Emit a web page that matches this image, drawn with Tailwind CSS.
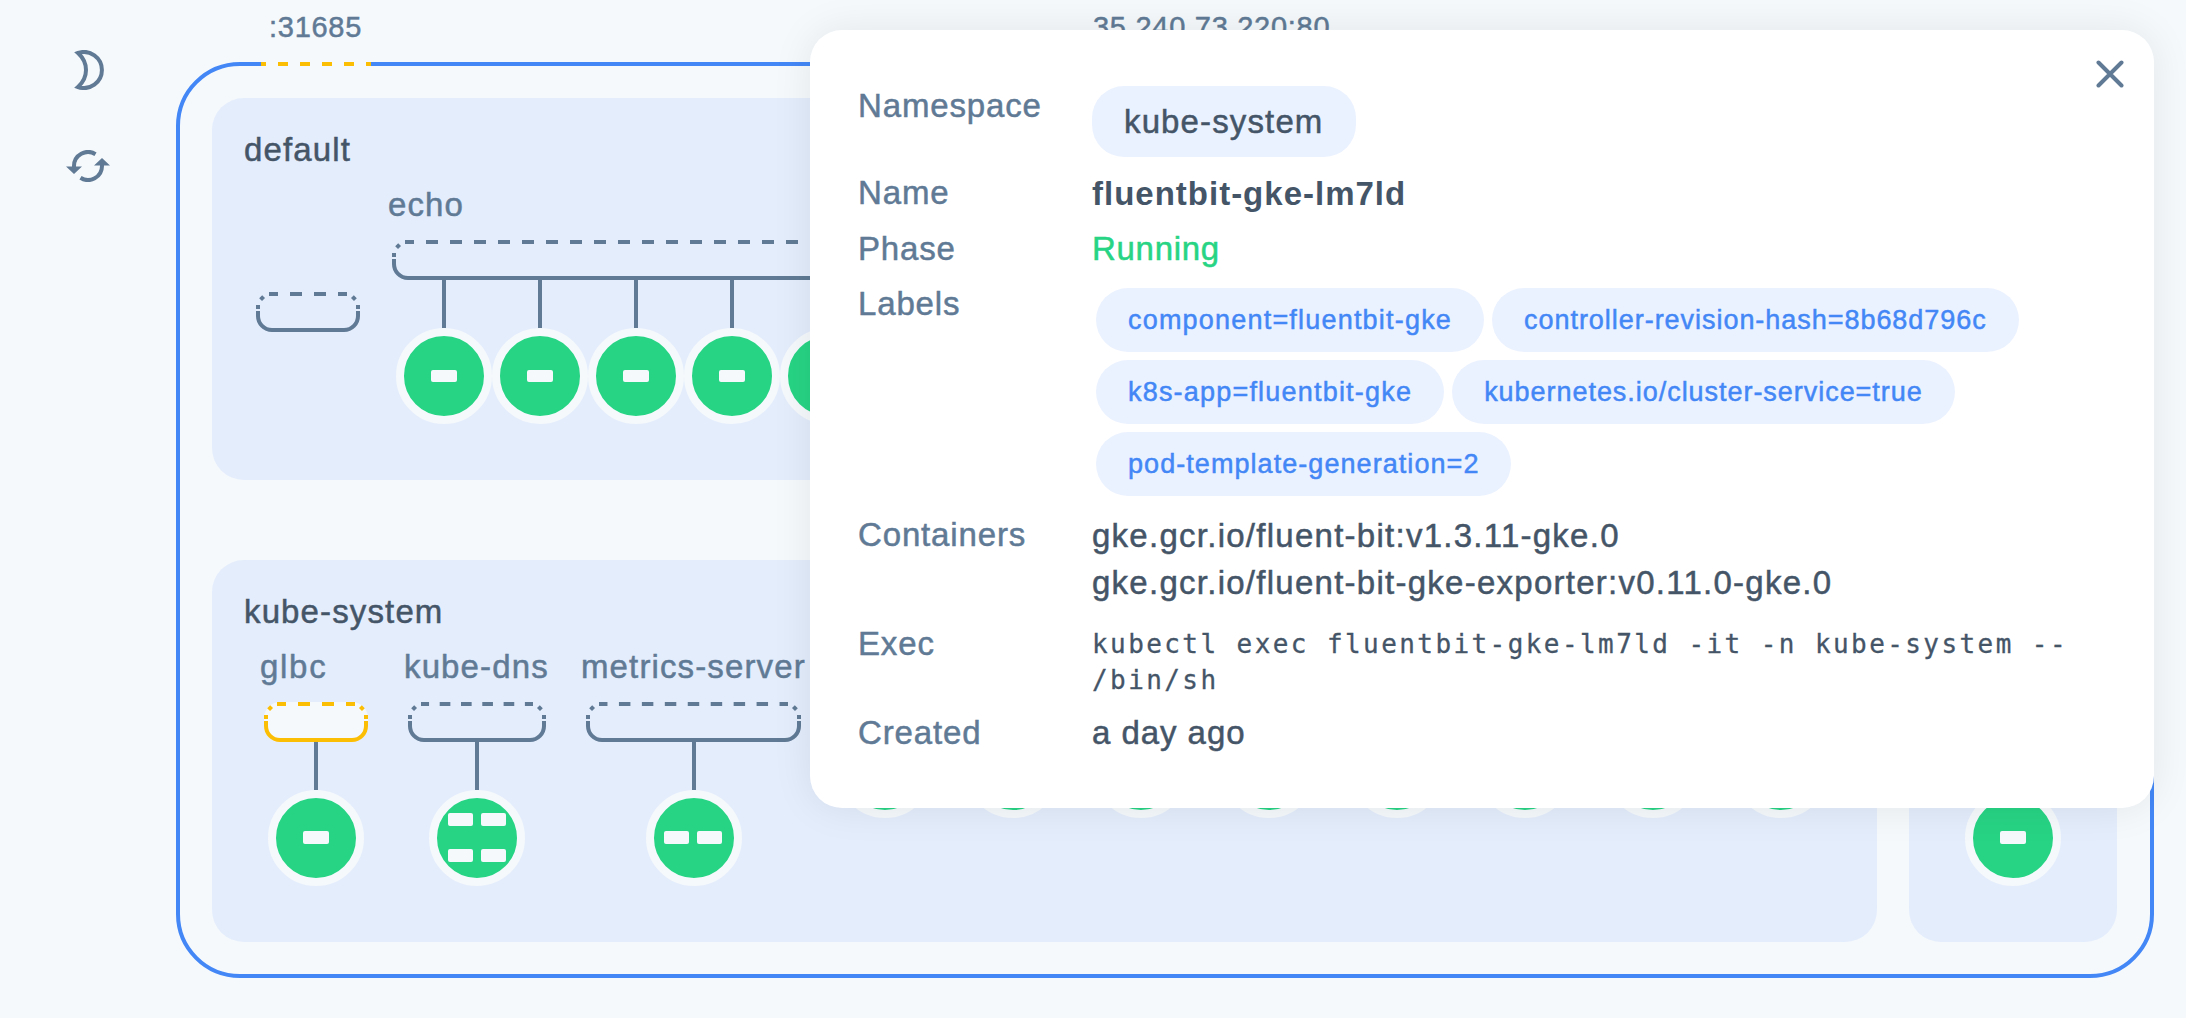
<!DOCTYPE html>
<html lang="en">
<head>
<meta charset="utf-8">
<title>Cluster view</title>
<script src="https://cdn.jsdelivr.net/npm/@tailwindcss/browser@4"></script>
</head>
<body class="bg-[#f5f9fc]">
<div class="relative flex w-[2186px] h-[1018px] overflow-hidden bg-[#f5f9fc] font-['Liberation_Sans',Arial,sans-serif] text-[33px] leading-[40px] tracking-[1.130px] text-[#607a95] [-webkit-text-stroke:0.5px]">

  <!-- toolbar -->
  <nav class="flex w-[176px] shrink-0 flex-col items-center pt-[50px]">
    <button class="block h-10 w-[44px]" aria-label="Dark mode">
      <svg class="h-10 w-[44px]" viewBox="0 0 44 40" fill="none" stroke="#607a95" stroke-width="4"><path d="M12 3A18 18 0 1 1 12 37C17.500 32 20 26 20 20C20 14 17.500 8 12 3Z" stroke-linejoin="miter" stroke-miterlimit="4"/></svg>
    </button>
    <button class="mt-[60px] block h-8 w-[44px]" aria-label="Refresh">
      <svg class="h-8 w-[44px]" viewBox="0 0 44 32"><g fill="none" stroke="#607a95" stroke-width="4"><path d="M8 17V16A14 14 0 0 1 29.500 4.200"/><path d="M36 15V16A14 14 0 0 1 14.500 27.800"/></g><path fill="#607a95" d="M0 16.500H16L8 24ZM28 15.500H44L36 8Z"/></svg>
    </button>
  </nav>

  <!-- cluster -->
  <main class="mt-[62px] flex h-[916px] w-[1978px] flex-col gap-20 rounded-[64px] border-4 border-[#4387f6] p-8">

    <section class="h-[382px] w-[1905px] rounded-[32px] bg-[#e4edfc] pt-8">
      <h2 class="ml-8 text-[#455568]">default</h2>
      <div class="ml-11 flex gap-8 pt-[15px]">
        <div class="mt-[107px]">
          <svg class="block h-10 w-[104px]" viewBox="0 0 104 40" fill="none" stroke="#607a95" stroke-width="4"><path d="M13 2H91" stroke-dasharray="12 12" stroke-dashoffset="3"/><path d="M4.600 7.600L7.600 4.600M99.400 7.600L96.400 4.600M2 13V17M102 13V17"/><path d="M2 19V24A14 14 0 0 0 16 38H88A14 14 0 0 0 102 24V19"/></svg>
        </div>
        <div>
          <div class="-ml-1 h-[55px]">echo</div>
          <svg class="block h-10 w-[776px]" viewBox="0 0 776 40" fill="none" stroke="#607a95" stroke-width="4"><path d="M13 2H763" stroke-dasharray="12 12" stroke-dashoffset="3"/><path d="M4.600 7.600L7.600 4.600M771.400 7.600L768.400 4.600M2 13V17M774 13V17"/><path d="M2 19V24A14 14 0 0 0 16 38H760A14 14 0 0 0 774 24V19"/></svg>
          <div class="ml-1 flex">
            <div class="flex w-24 flex-col items-center"><i class="h-12 w-1 bg-[#607a95]"></i><div class="grid size-24 place-content-center rounded-full border-8 border-[#f5f9fc] bg-[#27d484]"><i class="h-3 w-[26px] rounded-[2px] bg-[#f5f9fc]"></i></div></div>
            <div class="flex w-24 flex-col items-center"><i class="h-12 w-1 bg-[#607a95]"></i><div class="grid size-24 place-content-center rounded-full border-8 border-[#f5f9fc] bg-[#27d484]"><i class="h-3 w-[26px] rounded-[2px] bg-[#f5f9fc]"></i></div></div>
            <div class="flex w-24 flex-col items-center"><i class="h-12 w-1 bg-[#607a95]"></i><div class="grid size-24 place-content-center rounded-full border-8 border-[#f5f9fc] bg-[#27d484]"><i class="h-3 w-[26px] rounded-[2px] bg-[#f5f9fc]"></i></div></div>
            <div class="flex w-24 flex-col items-center"><i class="h-12 w-1 bg-[#607a95]"></i><div class="grid size-24 place-content-center rounded-full border-8 border-[#f5f9fc] bg-[#27d484]"><i class="h-3 w-[26px] rounded-[2px] bg-[#f5f9fc]"></i></div></div>
            <div class="flex w-24 flex-col items-center"><i class="h-12 w-1 bg-[#607a95]"></i><div class="grid size-24 place-content-center rounded-full border-8 border-[#f5f9fc] bg-[#27d484]"><i class="h-3 w-[26px] rounded-[2px] bg-[#f5f9fc]"></i></div></div>
          </div>
        </div>
      </div>
    </section>

    <div class="flex gap-8">
      <section class="h-[382px] w-[1665px] rounded-[32px] bg-[#e4edfc] pt-8">
        <h2 class="ml-8 text-[#455568]">kube-system</h2>
        <div class="ml-[52px] flex gap-10 pt-[15px]">
          <div class="flex w-[104px] flex-col items-center">
            <div class="-ml-1 h-[55px] self-start tracking-[1.700px]">glbc</div>
            <svg class="block h-10 w-[104px]" viewBox="0 0 104 40" fill="none" stroke="#fcbd05" stroke-width="4"><rect width="104" height="40" rx="16" fill="#f5f9fc" stroke="none"/><path d="M13 2H91" stroke-dasharray="12 12" stroke-dashoffset="3"/><path d="M4.600 7.600L7.600 4.600M99.400 7.600L96.400 4.600M2 13V17M102 13V17"/><path d="M2 19V24A14 14 0 0 0 16 38H88A14 14 0 0 0 102 24V19"/></svg>
            <i class="h-12 w-1 bg-[#607a95]"></i>
            <div class="grid size-24 place-content-center rounded-full border-8 border-[#f5f9fc] bg-[#27d484] pb-px"><i class="h-[13px] w-[26px] rounded-[2px] bg-[#f5f9fc]"></i></div>
          </div>
          <div class="flex w-[138px] flex-col items-center">
            <div class="-ml-1 h-[55px] self-start whitespace-nowrap">kube-dns</div>
            <svg class="block h-10 w-[138px]" viewBox="0 0 138 40" fill="none" stroke="#607a95" stroke-width="4"><path d="M13 2H125" stroke-dasharray="10.650 10.650" stroke-dashoffset="2.600"/><path d="M4.600 7.600L7.600 4.600M133.400 7.600L130.400 4.600M2 13V17M136 13V17"/><path d="M2 19V24A14 14 0 0 0 16 38H122A14 14 0 0 0 136 24V19"/></svg>
            <i class="h-12 w-1 bg-[#607a95]"></i>
            <div class="grid size-24 grid-cols-[25px_25px] place-content-center gap-x-2 gap-y-[23px] rounded-full border-8 border-[#f5f9fc] bg-[#27d484] pb-px"><i class="h-[13px] rounded-[2px] bg-[#f5f9fc]"></i><i class="h-[13px] rounded-[2px] bg-[#f5f9fc]"></i><i class="h-[13px] rounded-[2px] bg-[#f5f9fc]"></i><i class="h-[13px] rounded-[2px] bg-[#f5f9fc]"></i></div>
          </div>
          <div class="flex w-[215px] flex-col items-center">
            <div class="-ml-[5px] h-[55px] self-start whitespace-nowrap">metrics-server</div>
            <svg class="block h-10 w-[215px]" viewBox="0 0 215 40" fill="none" stroke="#607a95" stroke-width="4"><path d="M13 2H202" stroke-dasharray="11.470 11.470" stroke-dashoffset="3"/><path d="M4.600 7.600L7.600 4.600M210.400 7.600L207.400 4.600M2 13V17M213 13V17"/><path d="M2 19V24A14 14 0 0 0 16 38H199A14 14 0 0 0 213 24V19"/></svg>
            <i class="h-12 w-1 bg-[#607a95]"></i>
            <div class="grid size-24 grid-cols-[25px_25px] place-content-center gap-2 rounded-full border-8 border-[#f5f9fc] bg-[#27d484] pb-px pr-0.5"><i class="h-[13px] rounded-[2px] bg-[#f5f9fc]"></i><i class="h-[13px] rounded-[2px] bg-[#f5f9fc]"></i></div>
          </div>
          <!-- unexposed pods -->
          <div class="-ml-1 mt-[75px] flex gap-8">
            <div class="size-24 rounded-full border-8 border-[#f5f9fc] bg-[#27d484]"></div>
            <div class="size-24 rounded-full border-8 border-[#f5f9fc] bg-[#27d484]"></div>
            <div class="size-24 rounded-full border-8 border-[#f5f9fc] bg-[#27d484]"></div>
            <div class="size-24 rounded-full border-8 border-[#f5f9fc] bg-[#27d484]"></div>
            <div class="size-24 rounded-full border-8 border-[#f5f9fc] bg-[#27d484]"></div>
            <div class="size-24 rounded-full border-8 border-[#f5f9fc] bg-[#27d484]"></div>
            <div class="size-24 rounded-full border-8 border-[#f5f9fc] bg-[#27d484]"></div>
            <div class="size-24 rounded-full border-8 border-[#f5f9fc] bg-[#27d484]"></div>
          </div>
        </div>
      </section>
      <section class="flex h-[382px] w-[208px] flex-col items-center rounded-[32px] bg-[#e4edfc] pt-[230px]">
        <div class="grid size-24 place-content-center rounded-full border-8 border-[#f5f9fc] bg-[#27d484] pb-px"><i class="h-[13px] w-[26px] rounded-[2px] bg-[#f5f9fc]"></i></div>
      </section>
    </div>
  </main>

  <!-- ports on the cluster edge -->
  <div class="absolute left-[269px] top-[7px] text-[29px] tracking-[0.720px]">:31685</div>
  <div class="absolute left-[1093px] top-[7px] text-[29px] tracking-[0.720px]">35.240.73.220:80</div>
  <svg class="absolute left-[261px] top-[62px] h-1 w-[110px] bg-[#f5f9fc]" viewBox="0 0 110 4"><path d="M0 2H110" stroke="#fcbd05" stroke-width="4" stroke-dasharray="10 12" stroke-dashoffset="5"/></svg>

  <!-- pod details -->
  <aside class="absolute left-[810px] top-[30px] h-[778px] w-[1344px] rounded-[32px] bg-white pl-12 pt-14 shadow-[0_0_40px_rgba(0,0,0,0.08)]">
    <button class="absolute right-[30px] top-[30px] block size-[28px]" aria-label="Close">
      <svg class="size-[28px]" viewBox="0 0 28 28" stroke="#607a95" stroke-width="4" stroke-linecap="round"><path d="M2.500 2.500L25.500 25.500M25.500 2.500L2.500 25.500"/></svg>
    </button>
    <dl class="grid grid-cols-[234px_1fr] grid-rows-[87px_56px_55px_231px_109px_89px_46px] text-[#455568]">
      <dt class="tracking-[0.850px] text-[#607a95]">Namespace</dt>
      <dd><span class="inline-block h-[71px] rounded-[32px] bg-[#ebf2ff] px-8 pt-4">kube-system</span></dd>
      <dt class="tracking-[0.850px] text-[#607a95]">Name</dt>
      <dd class="mt-px font-bold tracking-[1px] [-webkit-text-stroke:0px]">fluentbit-gke-lm7ld</dd>
      <dt class="tracking-[0.850px] text-[#607a95]">Phase</dt>
      <dd class="tracking-[0.700px] text-[#27d484]">Running</dd>
      <dt class="tracking-[0.850px] text-[#607a95]">Labels</dt>
      <dd class="ml-1 mt-1 flex flex-wrap content-start gap-2 pr-20 text-[27px] tracking-[0.960px] text-[#4387f6]">
        <span class="h-16 rounded-[32px] bg-[#ebf2ff] px-8 pt-3 tracking-[1.200px]">component=fluentbit-gke</span>
        <span class="h-16 rounded-[32px] bg-[#ebf2ff] px-8 pt-3">controller-revision-hash=8b68d796c</span>
        <span class="h-16 rounded-[32px] bg-[#ebf2ff] px-8 pt-3 tracking-[1.200px]">k8s-app=fluentbit-gke</span>
        <span class="h-16 rounded-[32px] bg-[#ebf2ff] px-8 pt-3">kubernetes.io/cluster-service=true</span>
        <span class="h-16 rounded-[32px] bg-[#ebf2ff] px-8 pt-3 tracking-[1.060px]">pod-template-generation=2</span>
      </dd>
      <dt class="tracking-[0.850px] text-[#607a95]">Containers</dt>
      <dd class="-mt-[3px] leading-[47px] tracking-[1.260px]">gke.gcr.io/fluent-bit:v1.3.11-gke.0<br>gke.gcr.io/fluent-bit-gke-exporter:v0.11.0-gke.0</dd>
      <dt class="tracking-[0.850px] text-[#607a95]">Exec</dt>
      <dd class="mt-[2px] font-['DejaVu_Sans_Mono',monospace] text-[26px] leading-[36px] tracking-[2.420px] [-webkit-text-stroke:0.3px]">kubectl exec fluentbit-gke-lm7ld -it -n kube-system --<br>/bin/sh</dd>
      <dt class="tracking-[0.850px] text-[#607a95]">Created</dt>
      <dd class="tracking-[0.950px]">a day ago</dd>
    </dl>
  </aside>
</div>
</body>
</html>
